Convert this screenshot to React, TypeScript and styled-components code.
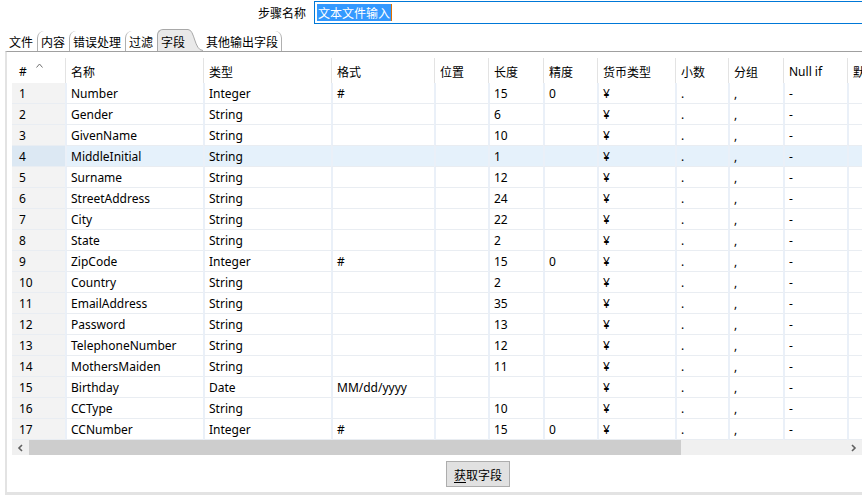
import React from 'react';
import styled, { createGlobalStyle } from 'styled-components';

const GlobalStyle = createGlobalStyle`
  html, body { margin: 0; padding: 0; background: #fff; }
  body {
    font-family: "Noto Sans", "Noto Sans CJK SC", sans-serif;
    font-size: 12px;
    color: #000;
  }
`;

const COLS = '53px 138px 128px 103px 54px 55px 54px 78px 53px 55px 64px 80px';

const Window = styled.div`
  width: 862px;
  height: 495px;
  overflow: hidden;
  background: #fff;
`;

const Frame = styled.div`
  width: 944px;
  height: 495px;
  display: flex;
  flex-direction: column;
`;

const StepRow = styled.div`
  display: grid;
  grid-template-columns: 306px 1fr;
  column-gap: 8px;
  align-items: center;
  height: 24px;
  padding-top: 1px;
  box-sizing: border-box;
`;

const StepLabel = styled.label`
  text-align: right;
  font-family: "Noto Sans CJK SC", sans-serif;
  line-height: 22px;
`;

const StepInput = styled.div`
  height: 23px;
  box-sizing: border-box;
  border: 1px solid #0078d7;
  display: flex;
  align-items: center;
  padding-left: 2px;
`;

const Selection = styled.span`
  background: #3399ff;
  color: #fff;
  font-family: "Noto Sans CJK SC", sans-serif;
  line-height: 17px;
  padding: 0 1px;
`;

const Caret = styled.span`
  width: 1px;
  height: 17px;
  background: #e07000;
`;

const TabStrip = styled.div`
  display: flex;
  align-items: flex-end;
  height: 27px;
  padding-left: 5px;
`;

const Tab = styled.div<{ $first?: boolean; $last?: boolean; $bare?: boolean }>`
  height: 20px;
  display: flex;
  align-items: center;
  padding: 0 4px 0 3px;
  font-family: "Noto Sans CJK SC", sans-serif;
  border-left: ${p => (p.$bare ? 'none' : `1px solid ${p.$first ? 'transparent' : '#b0b0b0'}`)};
  border-top-left-radius: 7px;
  ${p => p.$last && `
    border-right: 1px solid #b0b0b0;
    border-top-right-radius: 7px;
    padding-right: 3px;
  `}
`;

const ActiveTab = styled.div`
  display: flex;
  align-items: flex-end;
  height: 22px;
`;

const ActiveTabBody = styled.div`
  height: 22px;
  box-sizing: border-box;
  display: flex;
  align-items: center;
  padding: 1px 0 0 3px;
  background: #e9e9e9;
  border-left: 1px solid #a8a8a8;
  border-top: 1px solid #a8a8a8;
  border-top-left-radius: 6px;
  font-family: "Noto Sans CJK SC", sans-serif;
`;

const Panel = styled.div`
  flex: 1;
  margin-left: 5px;
  border-top: 1px solid #a0a0a0;
  border-left: 2px solid #e3e3e3;
  border-bottom: 3px solid #e3e3e3;
  padding: 3px 0 0 5px;
  display: flex;
  flex-direction: column;
  min-height: 0;
`;

const TableView = styled.div`
  width: 850px;
  overflow: hidden;
`;

const Grid = styled.div`
  width: 915px;
`;

const HeaderRow = styled.div`
  display: grid;
  grid-template-columns: ${COLS};
  height: 28px;
`;

const HeaderCell = styled.div<{ $first?: boolean }>`
  display: flex;
  align-items: center;
  padding: 2px 0 0 ${p => (p.$first ? 7 : 5)}px;
  margin-top: 3px;
  border-left: ${p => (p.$first ? 'none' : '1px solid #e3e3e3')};
  white-space: nowrap;
  overflow: hidden;
`;

const SortMark = styled.svg`
  align-self: flex-start;
  margin: 3px 0 0 9px;
`;

const Row = styled.div<{ $selected?: boolean }>`
  display: grid;
  grid-template-columns: ${COLS};
  height: 21px;
  background: ${p => (p.$selected ? '#e5f1fb' : '#fff')};
`;

const Cell = styled.div<{ $index?: boolean; $selected?: boolean }>`
  display: flex;
  align-items: center;
  box-sizing: border-box;
  padding-left: ${p => (p.$index ? 7 : 4)}px;
  border-bottom: 1px solid #e9edf2;
  border-left: ${p => (p.$index ? 'none' : '2px solid #eaf0f8')};
  background: ${p => (p.$index ? (p.$selected ? '#dce8f3' : '#f3f3f3') : 'transparent')};
  white-space: nowrap;
  overflow: hidden;
`;

const ScrollBar = styled.div`
  display: flex;
  height: 15px;
  background: #f0f0f0;
`;

const ScrollArrow = styled.div`
  width: 17px;
  display: flex;
  align-items: center;
  justify-content: center;
`;

const ScrollTrack = styled.div`
  flex: 1;
  display: flex;
`;

const ScrollThumb = styled.div`
  width: 652px;
  background: #cdcdcd;
`;

const ButtonBar = styled.div`
  flex: 1;
  display: flex;
  justify-content: center;
  align-items: flex-start;
  padding-top: 6px;
`;

const PushButton = styled.button`
  width: 64px;
  height: 26px;
  background: #e1e1e1;
  border: 1px solid #adadad;
  font-family: "Noto Sans CJK SC", sans-serif;
  font-size: 12px;
  color: #000;
  padding: 0;
  u { text-decoration: underline; text-underline-offset: 2px; }
`;

type Field = [string, string, string, string, string];

const fields: Field[] = [
  ['Number', 'Integer', '#', '15', '0'],
  ['Gender', 'String', '', '6', ''],
  ['GivenName', 'String', '', '10', ''],
  ['MiddleInitial', 'String', '', '1', ''],
  ['Surname', 'String', '', '12', ''],
  ['StreetAddress', 'String', '', '24', ''],
  ['City', 'String', '', '22', ''],
  ['State', 'String', '', '2', ''],
  ['ZipCode', 'Integer', '#', '15', '0'],
  ['Country', 'String', '', '2', ''],
  ['EmailAddress', 'String', '', '35', ''],
  ['Password', 'String', '', '13', ''],
  ['TelephoneNumber', 'String', '', '12', ''],
  ['MothersMaiden', 'String', '', '11', ''],
  ['Birthday', 'Date', 'MM/dd/yyyy', '', ''],
  ['CCType', 'String', '', '10', ''],
  ['CCNumber', 'Integer', '#', '15', '0'],
];

const headers = ['名称', '类型', '格式', '位置', '长度', '精度', '货币类型', '小数', '分组', 'Null if', '默认'];

function Chevron({ dir }: { dir: 'left' | 'right' }) {
  const pts = dir === 'left' ? '5,1 2,4 5,7' : '2,1 5,4 2,7';
  return (
    <svg width="7" height="8" viewBox="0 0 7 8">
      <polyline points={pts} fill="none" stroke="#606060" strokeWidth="1.6" />
    </svg>
  );
}

export default function App() {
  return (
    <Window>
      <GlobalStyle />
      <Frame>
        <StepRow>
          <StepLabel>步骤名称</StepLabel>
          <StepInput>
            <Selection>文本文件输入</Selection>
            <Caret />
          </StepInput>
        </StepRow>

        <TabStrip>
          <Tab $first>文件</Tab>
          <Tab>内容</Tab>
          <Tab>错误处理</Tab>
          <Tab>过滤</Tab>
          <ActiveTab>
            <ActiveTabBody>字段</ActiveTabBody>
            <svg width="18" height="22" viewBox="0 0 18 22">
              <path d="M0 0.5 H3 C10 0.5 9 21.5 18 21.5 V22 H0 Z" fill="#e9e9e9" />
              <path d="M0 0.5 H3 C10 0.5 9 21.5 18 21.5" fill="none" stroke="#a8a8a8" />
            </svg>
          </ActiveTab>
          <Tab $last $bare>其他输出字段</Tab>
        </TabStrip>

        <Panel>
          <TableView>
            <Grid>
              <HeaderRow>
                <HeaderCell $first>
                  #
                  <SortMark width="7" height="5" viewBox="0 0 7 5">
                    <polyline points="0.5,4.5 3.5,1 6.5,4.5" fill="none" stroke="#707070" />
                  </SortMark>
                </HeaderCell>
                {headers.map(h => (
                  <HeaderCell key={h}>{h}</HeaderCell>
                ))}
              </HeaderRow>
              {fields.map(([name, type, format, length, precision], i) => {
                const selected = i === 3;
                return (
                  <Row key={name} $selected={selected}>
                    <Cell $index $selected={selected}>{i + 1}</Cell>
                    <Cell>{name}</Cell>
                    <Cell>{type}</Cell>
                    <Cell>{format}</Cell>
                    <Cell />
                    <Cell>{length}</Cell>
                    <Cell>{precision}</Cell>
                    <Cell>¥</Cell>
                    <Cell>.</Cell>
                    <Cell>,</Cell>
                    <Cell>-</Cell>
                    <Cell />
                  </Row>
                );
              })}
            </Grid>
            <ScrollBar>
              <ScrollArrow>
                <Chevron dir="left" />
              </ScrollArrow>
              <ScrollTrack>
                <ScrollThumb />
              </ScrollTrack>
              <ScrollArrow>
                <Chevron dir="right" />
              </ScrollArrow>
            </ScrollBar>
          </TableView>
          <ButtonBar>
            <PushButton>
              <u>获</u>取字段
            </PushButton>
          </ButtonBar>
        </Panel>
      </Frame>
    </Window>
  );
}
